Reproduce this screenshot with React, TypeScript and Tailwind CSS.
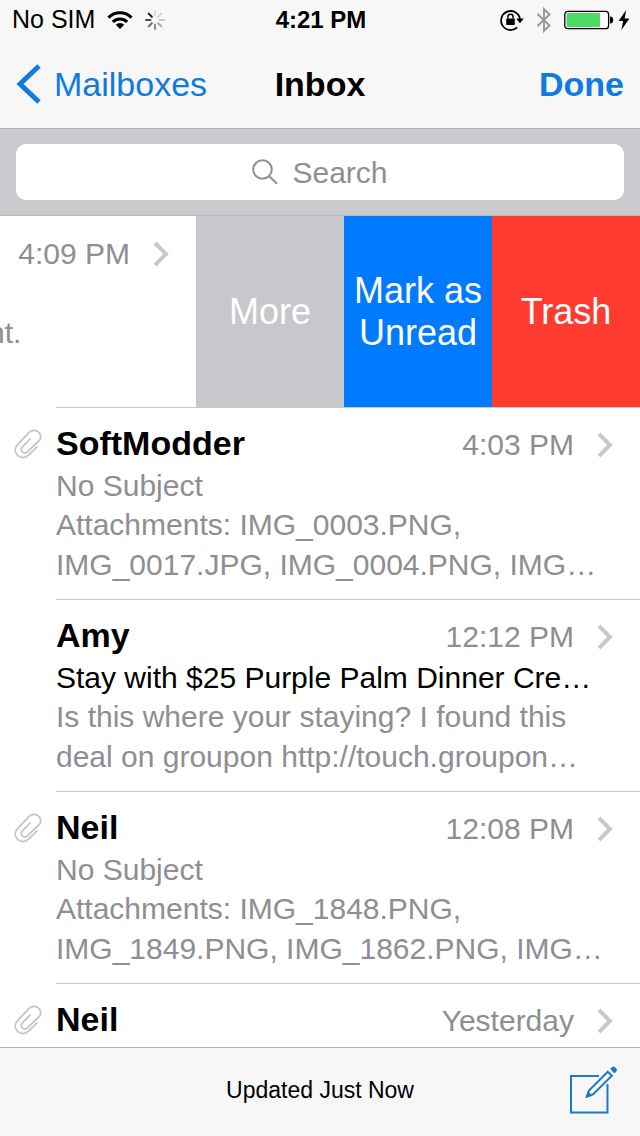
type Message = {
  from: string;
  time: string;
  subject: string;
  preview: string;
  hasAttachment?: boolean;
  unmutedSubject?: boolean;
};

const messages: Message[] = [
  {
    from: "SoftModder",
    time: "4:03 PM",
    subject: "No Subject",
    preview: "Attachments: IMG_0003.PNG, IMG_0017.JPG, IMG_0004.PNG, IMG…",
    hasAttachment: true,
  },
  {
    from: "Amy",
    time: "12:12 PM",
    subject: "Stay with $25 Purple Palm Dinner Cre…",
    preview:
      "Is this where your staying? I found this deal on groupon http://touch.groupon…",
    unmutedSubject: true,
  },
  {
    from: "Neil",
    time: "12:08 PM",
    subject: "No Subject",
    preview: "Attachments: IMG_1848.PNG, IMG_1849.PNG, IMG_1862.PNG, IMG…",
    hasAttachment: true,
  },
  {
    from: "Neil",
    time: "Yesterday",
    subject: "",
    preview: "",
    hasAttachment: true,
  },
];

function WifiIcon() {
  return (
    <svg width="26" height="18" viewBox="0 0 26 18" fill="none" stroke="#000">
      <path d="M1.5 6.6a16.3 16.3 0 0 1 23 0" strokeWidth="3" />
      <path d="M5.8 10.9a10.2 10.2 0 0 1 14.4 0" strokeWidth="3" />
      <path d="M13 18l-4.2-4.3a6 6 0 0 1 8.4 0z" fill="#000" stroke="none" />
    </svg>
  );
}

function SpinnerIcon() {
  // clockwise from twelve o'clock
  const shades = ["#dedede", "#d4d4d4", "#c4c4c4", "#a8a8a8", "#8a8a8a", "#6a6a6a", "#484848", "#1c1c1c"];
  return (
    <svg width="20" height="20" viewBox="0 0 20 20" strokeWidth="2" strokeLinecap="round">
      {shades.map((shade, i) => (
        <line key={i} x1="10" y1="1" x2="10" y2="5.5" stroke={shade} transform={`rotate(${i * 45} 10 10)`} />
      ))}
    </svg>
  );
}

function RotationLockIcon() {
  return (
    <svg width="24" height="22" viewBox="0 0 24 22" fill="none" stroke="#000">
      <path d="M17.2 18.4A9.5 9.5 0 1 1 20 10" strokeWidth="1.8" />
      <path d="M16.2 9.4h7.6L20 14.2z" fill="#000" stroke="none" />
      <rect x="6.2" y="9.4" width="8.6" height="6.6" rx="0.8" fill="#000" stroke="none" />
      <path d="M7.9 9.6V7.8a2.6 2.6 0 0 1 5.2 0v1.8" strokeWidth="1.5" />
    </svg>
  );
}

function BluetoothIcon() {
  return (
    <svg width="16" height="26" viewBox="0 0 16 26" fill="none" stroke="#999" strokeWidth="2">
      <path d="M1.5 7l12 11.5L8 23.8V2.2l5.5 5.3L1.5 19" />
    </svg>
  );
}

function BatteryIcon() {
  return (
    <svg width="50" height="20" viewBox="0 0 50 20">
      <rect x="0.8" y="1.3" width="43.8" height="17.4" rx="3" fill="#fff" stroke="#000" strokeWidth="1.3" />
      <rect x="2.5" y="3" width="33.5" height="14" rx="1" fill="#4cd964" />
      <path d="M46 6.5a3.2 3.5 0 0 1 0 7z" fill="#000" />
    </svg>
  );
}

function BoltIcon() {
  return (
    <svg width="12" height="20" viewBox="0 0 12 20">
      <path d="M8.2 0L0.6 11h4.6L3.4 20 11.4 8.4H6.6z" fill="#000" />
    </svg>
  );
}

function Chevron() {
  return (
    <svg className="shrink-0" width="16" height="26" viewBox="0 0 16 26" fill="none" stroke="#c7c7cc" strokeWidth="4">
      <path d="M2 2l11 11L2 24" />
    </svg>
  );
}

function PaperclipIcon() {
  return (
    <svg width="28" height="30" viewBox="0 0 28 30" fill="none" stroke="#c4c4c8" strokeWidth="1.8" strokeLinecap="round">
      <path d="M22.8 18.2L14.6 26.2C11.4 29.2 6.8 29.4 3.6 26.4C0.5 23.4 0.4 19 3.6 15.6L14.8 3.7C17.6 0.7 21.8 0.5 24.6 3.1C27.4 5.8 27.3 9.6 24.6 12.2L13.4 22.8C12 24.1 9.8 24.1 8.4 22.8C7 21.4 7 19.4 8.4 17.9L16 10" />
    </svg>
  );
}

function SearchIcon() {
  return (
    <svg width="26" height="26" viewBox="0 0 26 26" fill="none" stroke="#8e8e93" strokeWidth="2">
      <circle cx="10.5" cy="10.5" r="9.3" />
      <path d="M17 17l8 7.8" />
    </svg>
  );
}

function ComposeIcon() {
  return (
    <svg width="48" height="48" viewBox="0 0 48 48" fill="none" stroke="#1a78cf" strokeWidth="2">
      <path d="M30 10H2v36.5h36.5V18" />
      <path d="M18 30.5l2-6L38.8 5.7l4 4L24 28.5z" strokeWidth="2" />
      <path d="M18 30.5l1.2-3.4 2.4 2.2z" fill="#1a78cf" />
      <path d="M41.6 3l1-1a2.6 2.6 0 0 1 3.9 3.9l-1 1z" fill="#1a78cf" strokeWidth="1" />
    </svg>
  );
}

function StatusBar() {
  return (
    <div className="grid h-10 grid-cols-[1fr_auto_1fr] items-center pr-2.5 pl-3 text-[24px]">
      <div className="flex items-center gap-3">
        <span className="text-[25px]">No SIM</span>
        <WifiIcon />
        <SpinnerIcon />
      </div>
      <span className="font-bold">4:21 PM</span>
      <div className="flex items-center justify-end gap-3">
        <RotationLockIcon />
        <BluetoothIcon />
        <div className="flex items-center gap-1">
          <BatteryIcon />
          <BoltIcon />
        </div>
      </div>
    </div>
  );
}

function TimeLabel({ time }: { time: string }) {
  return (
    <div className="flex items-center gap-[23px] text-[30px] leading-10 text-[#8e8e93]">
      <span>{time}</span>
      <Chevron />
    </div>
  );
}

function MessageRow({ message }: { message: Message }) {
  return (
    <li className="flex h-48 shrink-0">
      <div className="w-14 shrink-0 pt-[21px] pl-3.5">
        {message.hasAttachment && <PaperclipIcon />}
      </div>
      <div className="min-w-0 flex-1 border-b border-[#c8c7cc] pt-[13px] pr-[27px]">
        <div className="flex items-baseline justify-between">
          <h2 className="text-[34px] leading-[45px] font-bold">{message.from}</h2>
          <TimeLabel time={message.time} />
        </div>
        <p
          className={
            message.unmutedSubject
              ? "text-[30px] leading-[39px] whitespace-nowrap"
              : "text-[30px] leading-[39px] text-[#8e8e93]"
          }
        >
          {message.subject}
        </p>
        <p className="text-[30px] leading-10 text-[#8e8e93]">{message.preview}</p>
      </div>
    </li>
  );
}

function SwipedRow() {
  return (
    <li className="flex h-48 shrink-0 flex-col">
      <div className="flex flex-1">
        <div className="min-w-0 flex-1 overflow-hidden pt-[18px] pr-[27px]">
          <div className="flex justify-end">
            <TimeLabel time="4:09 PM" />
          </div>
          <p className="-ml-3 pt-[39px] text-[30px] leading-10 text-[#8e8e93]">nt.</p>
        </div>
        <button type="button" className="w-37 bg-[#c7c7cc] text-[36px] leading-[42px] text-white">
          More
        </button>
        <button type="button" className="w-37 bg-[#007aff] text-[36px] leading-[42px] text-white">
          Mark as Unread
        </button>
        <button type="button" className="w-37 bg-[#ff3b30] text-[36px] leading-[42px] text-white">
          Trash
        </button>
      </div>
      <div className="ml-14 h-px bg-[#c8c7cc]" />
    </li>
  );
}

export default function App() {
  return (
    <div className="flex h-screen flex-col overflow-hidden bg-white font-['Liberation_Sans',Arial,sans-serif] text-black">
      <header className="border-b border-[#b2b2b6] bg-[#f7f7f8]">
        <StatusBar />
        <nav className="grid h-22 grid-cols-[1fr_auto_1fr] items-center px-4 text-[34px]">
          <button type="button" className="flex items-center gap-3 text-[#107ae0]">
            <svg width="26" height="40" viewBox="0 0 26 40" fill="none" stroke="#107ae0" strokeWidth="5">
              <path d="M23 2L4 20l19 18" />
            </svg>
            Mailboxes
          </button>
          <h1 className="font-bold">Inbox</h1>
          <button type="button" className="justify-self-end font-bold text-[#107ae0]">
            Done
          </button>
        </nav>
      </header>

      <div className="border-b border-[#b8b8bd] bg-[#c9c9ce] px-4 py-[15px]">
        <label className="flex h-14 items-center justify-center gap-3.5 rounded-[10px] bg-white">
          <SearchIcon />
          <input
            type="search"
            aria-label="Search"
            placeholder="Search"
            className="[field-sizing:content] text-[30px] outline-none placeholder:text-[#8e8e93]"
          />
        </label>
      </div>

      <ul className="flex min-h-0 flex-1 flex-col overflow-hidden">
        <SwipedRow />
        {messages.map((message, i) => (
          <MessageRow key={i} message={message} />
        ))}
      </ul>

      <footer className="grid h-[89px] shrink-0 grid-cols-[1fr_auto_1fr] items-center border-t border-[#b2b2b6] bg-[#f7f7f8] px-[23px] pb-1">
        <span className="col-start-2 text-[23px]">Updated Just Now</span>
        <button type="button" aria-label="Compose" className="justify-self-end">
          <ComposeIcon />
        </button>
      </footer>
    </div>
  );
}
